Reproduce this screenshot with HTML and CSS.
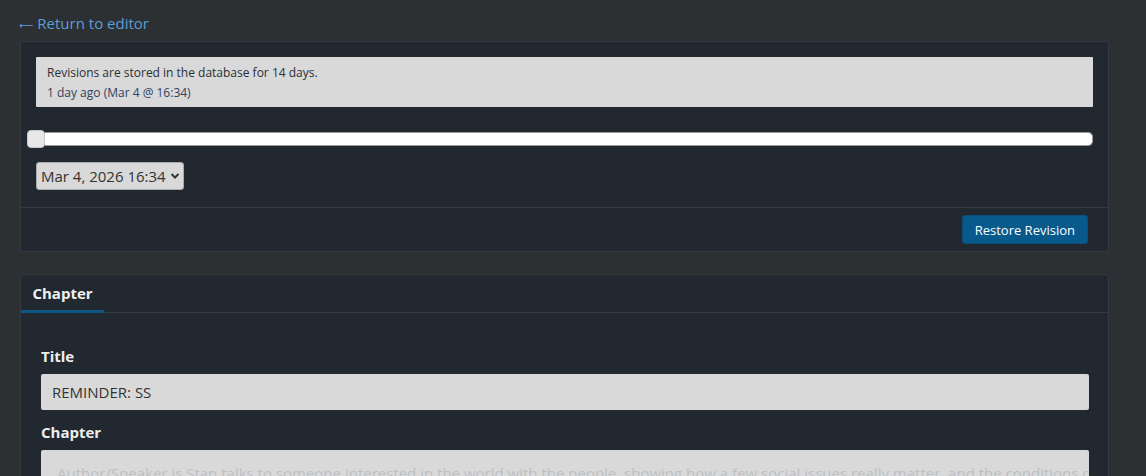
FILE: index.html
```html
<!DOCTYPE html>
<html>
<head>
<meta charset="utf-8">
<link rel="stylesheet" href="styles.css">
</head>
<body>
<div class="page">
  <a class="back" href="#"><span class="arrow">⟵</span>Return to editor</a>
  <section class="panel rev">
    <div class="rev-body">
      <div class="info">
        <div>Revisions are stored in the database for 14 days.</div>
        <div class="ago">1 day ago (Mar 4 @ 16:34)</div>
      </div>
      <div class="slider">
        <div class="thumb"></div>
        <div class="track"></div>
      </div>
      <div class="select">Mar 4, 2026 16:34<svg width="10" height="8" viewBox="0 0 10 8"><path d="M1.5 2 L5 5.5 L8.5 2" fill="none" stroke="#333" stroke-width="2"/></svg></div>
    </div>
    <div class="rev-foot">
      <button class="restore">Restore Revision</button>
    </div>
  </section>
  <section class="panel chap">
    <div class="tabs"><div class="tab">Chapter</div></div>
    <div class="chap-body">
      <label class="lbl">Title</label>
      <div class="input">REMINDER: SS</div>
      <label class="lbl">Chapter</label>
      <div class="textarea"><span class="ph">Author/Speaker is Stan talks to someone interested in the world with the people, showing how a few social issues really matter, and the conditions of life</span></div>
    </div>
  </section>
</div>
</body>
</html>
```

FILE: styles.css
```css
html, body { margin: 0; padding: 0; }
body {
  background: #2d3033;
  font-family: "Open Sans", "Noto Sans", sans-serif;
  overflow: hidden;
  height: 476px;
}
.page {
  padding: 12px 37px 0 20px;
  display: flex;
  flex-direction: column;
}
.back {
  display: block;
  height: 22px;
  color: #5b9fd6;
  text-decoration: none;
  font-size: 15px;
  line-height: 22px;
  margin-left: -1px;
  margin-bottom: 7px;
}
.arrow {
  display: inline-block;
  font-family: "DejaVu Sans", sans-serif;
  font-size: 10px;
  line-height: 1;
  margin-right: 4px;
  white-space: nowrap;
}
.panel {
  background: #212830;
  border: 1px solid #343a40;
  border-radius: 2px;
}
.rev-body {
  padding: 15px 15px 17px;
  display: flex;
  flex-direction: column;
  align-items: flex-start;
}
.info {
  align-self: stretch;
  background: #d9d9d9;
  border-radius: 1px;
  padding: 6px 11px 4px;
  height: 40px;
  font-size: 12px;
  line-height: 20px;
  color: #2b2f36;
}
.info .ago { color: #2f4260; }
.slider {
  align-self: stretch;
  margin: 23px 0 0 -9px;
  height: 18px;
  display: flex;
  align-items: center;
}
.track {
  flex: 1;
  height: 12px;
  background: #fff;
  border: 1px solid #9a9a9a;
  border-left: none;
  border-radius: 0 5px 5px 0;
}
.thumb {
  width: 18px;
  height: 18px;
  background: #e8e8e8;
  border: 1px solid #c8c8c8;
  border-radius: 4px;
  box-sizing: border-box;
}
.select {
  margin-top: 14px;
  height: 28px;
  box-sizing: border-box;
  background: #d9d9d9;
  border: 1px solid #aaa;
  border-radius: 3px;
  padding: 0 3px 0 4px;
  display: flex;
  align-items: center;
  gap: 4px;
  font-size: 15px;
  color: #333;
}
.rev-foot {
  border-top: 1px solid #343a40;
  padding: 7px 20px 7px;
  display: flex;
  justify-content: flex-end;
}
.restore {
  background: #08598c;
  color: #fff;
  border: 1px solid #0a4f7c;
  border-radius: 3px;
  font-family: "Open Sans", "Noto Sans", sans-serif;
  font-size: 13px;
  height: 29px;
  padding: 0 12px;
}
.chap {
  margin-top: 22px;
  border-radius: 4px 4px 0 0;
  height: 300px;
}
.tabs {
  border-bottom: 1px solid #343a40;
  display: flex;
}
.tab {
  width: 83px;
  box-sizing: border-box;
  text-align: center;
  color: #f0f0f0;
  font-weight: 700;
  font-size: 15px;
  line-height: 20px;
  padding: 8px 0 7px;
  border-bottom: 3px solid #0b5788;
  margin-bottom: -1px;
}
.chap-body {
  padding: 33px 19px 0 20px;
  display: flex;
  flex-direction: column;
}
.lbl {
  color: #eeeeee;
  font-weight: 700;
  font-size: 15px;
  line-height: 20px;
  margin-bottom: 8px;
}
.input {
  height: 36px;
  box-sizing: border-box;
  background: #d9d9d9;
  border-radius: 2px;
  padding: 0 11px;
  display: flex;
  align-items: center;
  font-size: 15px;
  color: #333;
  margin-bottom: 12px;
}
.textarea {
  height: 120px;
  background: #d9d9d9;
  border-radius: 2px;
  padding: 12px 16px;
  font-size: 15px;
  line-height: 22px;
  white-space: nowrap;
  overflow: hidden;
}
.ph { color: #bcc0c4; }
```
